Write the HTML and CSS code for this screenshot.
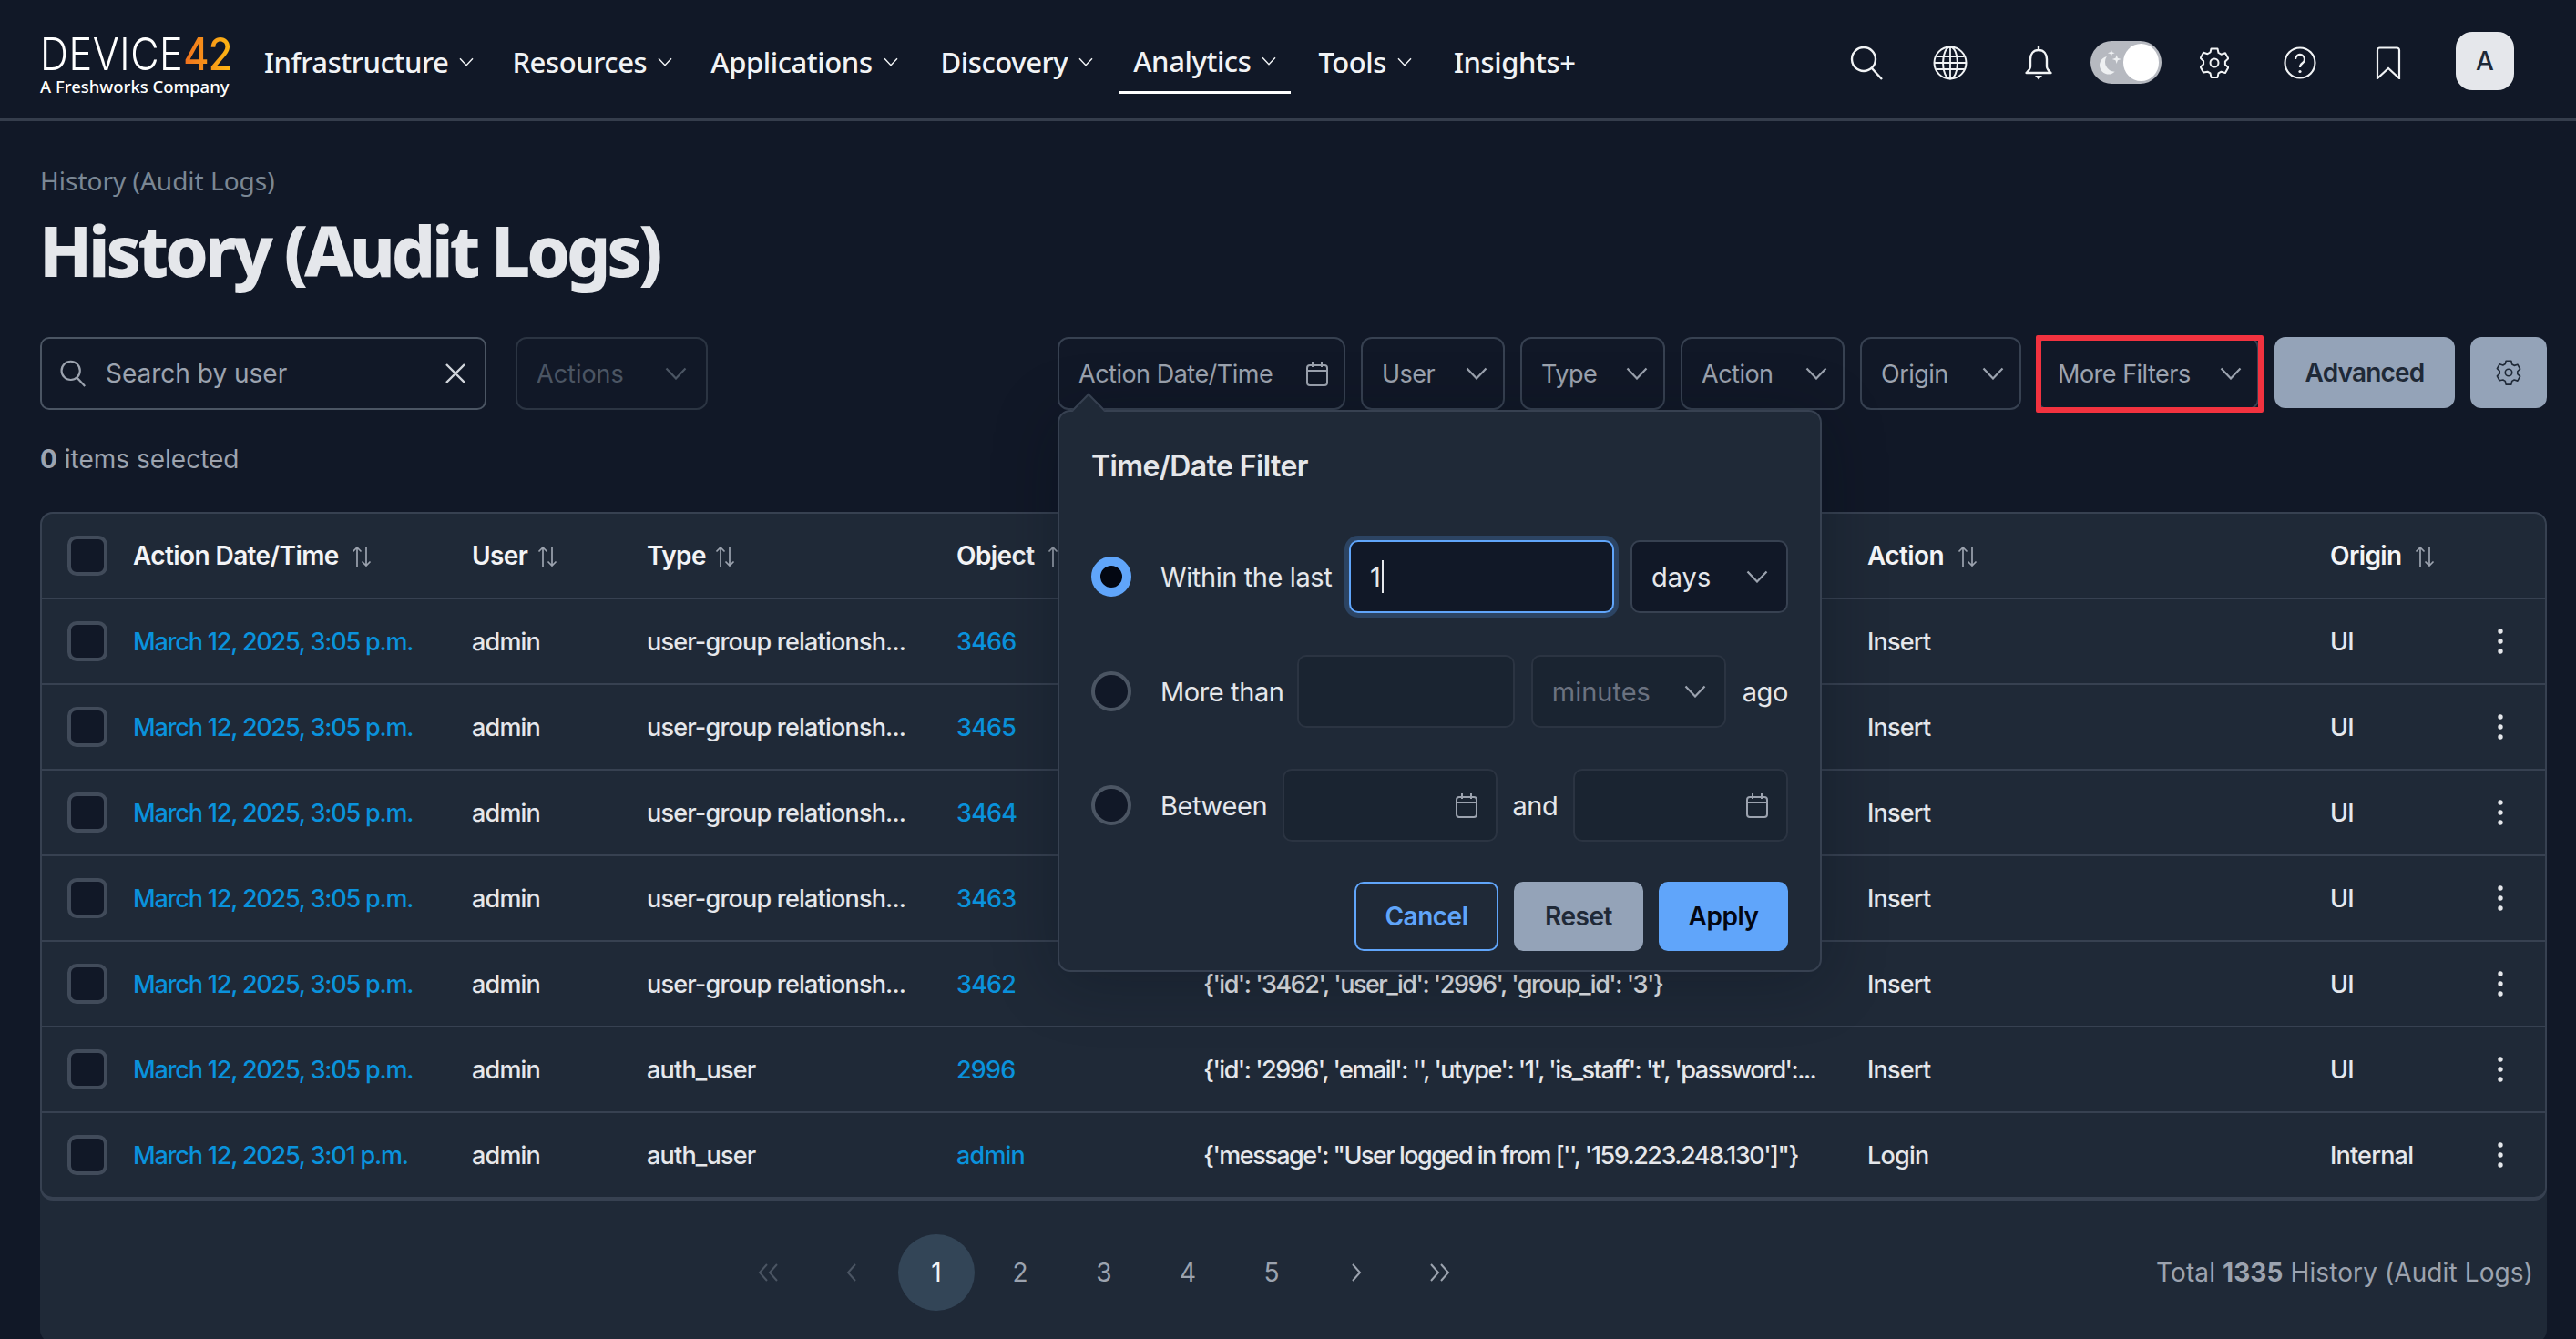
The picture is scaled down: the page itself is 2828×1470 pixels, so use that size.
FILE: index.html
```html
<!DOCTYPE html>
<html lang="en">
<head>
    <meta charset="UTF-8">
    <meta name="viewport" content="width=device-width, initial-scale=1.0">
    <title>History (Audit Logs)</title>
    <link rel="stylesheet" href="styles.css">
</head>
<body>
    <svg class="sprites" width="0" height="0">
        <symbol id="chev" viewBox="0 0 24 14"><path d="M1.5 1.5 12 12.5 22.5 1.5" fill="none" stroke="currentColor" stroke-width="2.2"/></symbol>
        <symbol id="sort" viewBox="0 0 22 24"><path d="M6 23V2M1.5 6.5 6 2l4.500 4.500M16 1v21M11.500 17.500 16 22l4.500-4.500" fill="none" stroke="currentColor" stroke-width="1.700"/></symbol>
        <symbol id="cal" viewBox="0 0 24 28"><path d="M4 5h16a3 3 0 0 1 3 3v16a3 3 0 0 1-3 3H4a3 3 0 0 1-3-3V8a3 3 0 0 1 3-3ZM1 11h22M7 1v6M17 1v6" fill="none" stroke="currentColor" stroke-width="2"/></symbol>
        <symbol id="gear" viewBox="0 0 32 34"><path d="M12.500 1.500h7l1 4.500 3 1.700 4.500-1.400 3.300 6-3.400 3.200v3.400l3.400 3.200-3.300 6-4.500-1.400-3 1.700-1 4.500h-7l-1-4.500-3-1.700L4 27.600l-3.300-6 3.400-3.200v-3.400L.7 11.800l3.300-6 4.500 1.400 3-1.700Z" fill="none" stroke="currentColor" stroke-width="2" stroke-linejoin="round"/><circle cx="16" cy="17" r="4.500" fill="none" stroke="currentColor" stroke-width="2"/></symbol>
        <symbol id="kebab" viewBox="0 0 6 28"><circle cx="3" cy="3" r="2.700" fill="currentColor"/><circle cx="3" cy="14" r="2.700" fill="currentColor"/><circle cx="3" cy="25" r="2.700" fill="currentColor"/></symbol>
        <symbol id="pg-first" viewBox="0 0 26 20"><path d="M11 1 3 10l8 9M22 1l-8 9 8 9" fill="none" stroke="currentColor" stroke-width="2"/></symbol>
        <symbol id="pg-prev" viewBox="0 0 26 20"><path d="M16 1 8 10l8 9" fill="none" stroke="currentColor" stroke-width="2"/></symbol>
        <symbol id="pg-next" viewBox="0 0 26 20"><path d="m10 1 8 9-8 9" fill="none" stroke="currentColor" stroke-width="2"/></symbol>
        <symbol id="pg-last" viewBox="0 0 26 20"><path d="m4 1 8 9-8 9M15 1l8 9-8 9" fill="none" stroke="currentColor" stroke-width="2"/></symbol>
    </svg>

    <header class="topbar">
        <div class="logo">
            <div class="logo-word">DEVICE<span class="logo-num">42</span></div>
            <div class="logo-sub">A Freshworks Company</div>
        </div>
        <nav class="nav">
            <a class="nav-item">Infrastructure <svg class="nav-chev"><use href="#chev"/></svg></a>
            <a class="nav-item">Resources <svg class="nav-chev"><use href="#chev"/></svg></a>
            <a class="nav-item">Applications <svg class="nav-chev"><use href="#chev"/></svg></a>
            <a class="nav-item">Discovery <svg class="nav-chev"><use href="#chev"/></svg></a>
            <a class="nav-item active">Analytics <svg class="nav-chev"><use href="#chev"/></svg></a>
            <a class="nav-item">Tools <svg class="nav-chev"><use href="#chev"/></svg></a>
            <a class="nav-item">Insights+</a>
        </nav>
        <div class="top-icons">
            <svg class="ti ti-search" viewBox="0 0 36 38"><circle cx="15" cy="15" r="13" fill="none" stroke="currentColor" stroke-width="2.400"/><path d="m24 25 11 12" stroke="currentColor" stroke-width="2.400"/></svg>
            <svg class="ti ti-globe" viewBox="0 0 38 38"><g fill="none" stroke="currentColor" stroke-width="2"><circle cx="19" cy="19" r="17.500"/><ellipse cx="19" cy="19" rx="8" ry="17.500"/><path d="M19 1.500v35M3.500 12h31M3.500 26h31M1.500 19h35" stroke-width="1.800"/></g></svg>
            <svg class="ti ti-bell" viewBox="0 0 32 38"><path d="M16 1v4M16 5c-6 0-9 4.500-9 10v8c0 3-2.500 5-4.500 7h27c-2-2-4.500-4-4.500-7v-8c0-5.500-3-10-9-10Z" fill="none" stroke="currentColor" stroke-width="2.400" stroke-linejoin="round"/><path d="M12 33h8l-4 4.500Z" fill="currentColor"/></svg>
            <div class="mode-toggle">
                <svg class="mode-moon" viewBox="0 0 30 32"><path d="M12 9a10 10 0 1 0 9 17A11 11 0 0 1 12 9Z" fill="#eef0f2"/><path d="m17 1 1 3 3 1-3 1-1 3-1-3-3-1 3-1ZM23 7l1.200 3.800L28 12l-3.800 1.200L23 17l-1.200-3.800L18 12l3.800-1.200Z" fill="#eef0f2"/></svg>
                <span class="mode-knob"></span>
            </div>
            <svg class="ti ti-gear"><use href="#gear"/></svg>
            <svg class="ti ti-help" viewBox="0 0 36 36"><circle cx="18" cy="18" r="16.500" fill="none" stroke="currentColor" stroke-width="2.200"/><path d="M13 14a5 5 0 1 1 8 4c-2 1.500-3 2.500-3 5" fill="none" stroke="currentColor" stroke-width="2.200"/><circle cx="18" cy="27.500" r="1.600" fill="currentColor"/></svg>
            <svg class="ti ti-mark" viewBox="0 0 28 36"><path d="M2 35V4a2.500 2.500 0 0 1 2.500-2.500h19A2.500 2.500 0 0 1 26 4v31L14 24Z" fill="none" stroke="currentColor" stroke-width="2.200"/></svg>
            <div class="avatar">A</div>
        </div>
    </header>

    <main class="page">
        <div class="crumb">History (Audit Logs)</div>
        <h1 class="title">History (Audit Logs)</h1>

        <div class="toolbar">
            <div class="search">
                <svg class="search-ico" viewBox="0 0 36 38"><circle cx="15" cy="15" r="13" fill="none" stroke="currentColor" stroke-width="2.800"/><path d="m24 25 11 12" stroke="currentColor" stroke-width="2.800"/></svg>
                <span class="search-text">Search by user</span>
                <svg class="search-x" viewBox="0 0 24 24"><path d="m2 2 20 20M22 2 2 22" stroke="currentColor" stroke-width="2.400"/></svg>
            </div>
            <div class="pick pick-off actions">Actions <svg class="chev"><use href="#chev"/></svg></div>

            <div class="filters">
                <div class="pick f-date">Action Date/Time <svg class="cal"><use href="#cal"/></svg></div>
                <div class="pick f-user">User <svg class="chev"><use href="#chev"/></svg></div>
                <div class="pick f-type">Type <svg class="chev"><use href="#chev"/></svg></div>
                <div class="pick f-action">Action <svg class="chev"><use href="#chev"/></svg></div>
                <div class="pick f-origin">Origin <svg class="chev"><use href="#chev"/></svg></div>
                <div class="pick f-more">More Filters <svg class="chev"><use href="#chev"/></svg></div>
                <button class="btn-grey btn-adv">Advanced</button>
                <button class="btn-grey btn-cog"><svg class="cog"><use href="#gear"/></svg></button>

                <div class="popup">
                    <div class="popup-title">Time/Date Filter</div>

                    <div class="pop-row row-a">
                        <span class="radio on"></span>
                        <span class="pop-label">Within the last</span>
                        <div class="field field-on"><span>1</span><i class="caret"></i></div>
                        <div class="field field-days">days <svg class="chev"><use href="#chev"/></svg></div>
                    </div>
                    <div class="pop-row row-b">
                        <span class="radio"></span>
                        <span class="pop-label">More than</span>
                        <div class="field field-off field-num"></div>
                        <div class="field field-off field-min">minutes <svg class="chev"><use href="#chev"/></svg></div>
                        <span class="pop-label">ago</span>
                    </div>
                    <div class="pop-row row-c">
                        <span class="radio"></span>
                        <span class="pop-label">Between</span>
                        <div class="field field-off field-when"><svg class="cal"><use href="#cal"/></svg></div>
                        <span class="pop-label">and</span>
                        <div class="field field-off field-when"><svg class="cal"><use href="#cal"/></svg></div>
                    </div>

                    <div class="pop-btns">
                        <button class="btn btn-cancel">Cancel</button>
                        <button class="btn btn-reset">Reset</button>
                        <button class="btn btn-apply">Apply</button>
                    </div>
                </div>
            </div>
        </div>

        <div class="selected"><b>0</b> items selected</div>

        <section class="panel">
            <table class="grid">
                <colgroup>
                    <col class="c-check"><col class="c-date"><col class="c-user"><col class="c-type"><col class="c-obj"><col class="c-change"><col class="c-action"><col class="c-origin"><col class="c-menu">
                </colgroup>
                <thead>
                    <tr>
                        <th><span class="box"></span></th>
                        <th>Action Date/Time <svg class="sort"><use href="#sort"/></svg></th>
                        <th>User <svg class="sort"><use href="#sort"/></svg></th>
                        <th>Type <svg class="sort"><use href="#sort"/></svg></th>
                        <th>Object <svg class="sort"><use href="#sort"/></svg></th>
                        <th></th>
                        <th>Action <svg class="sort"><use href="#sort"/></svg></th>
                        <th>Origin <svg class="sort"><use href="#sort"/></svg></th>
                        <th></th>
                    </tr>
                </thead>
                <tbody>
                    <tr>
                        <td><span class="box"></span></td><td class="when"><a>March 12, 2025, 3:05 p.m.</a></td><td>admin</td><td>user-group relationsh...</td><td><a>3466</a></td>
                        <td class="change"></td><td>Insert</td><td>UI</td><td><svg class="kebab"><use href="#kebab"/></svg></td>
                    </tr>
                    <tr>
                        <td><span class="box"></span></td><td class="when"><a>March 12, 2025, 3:05 p.m.</a></td><td>admin</td><td>user-group relationsh...</td><td><a>3465</a></td>
                        <td class="change"></td><td>Insert</td><td>UI</td><td><svg class="kebab"><use href="#kebab"/></svg></td>
                    </tr>
                    <tr>
                        <td><span class="box"></span></td><td class="when"><a>March 12, 2025, 3:05 p.m.</a></td><td>admin</td><td>user-group relationsh...</td><td><a>3464</a></td>
                        <td class="change"></td><td>Insert</td><td>UI</td><td><svg class="kebab"><use href="#kebab"/></svg></td>
                    </tr>
                    <tr>
                        <td><span class="box"></span></td><td class="when"><a>March 12, 2025, 3:05 p.m.</a></td><td>admin</td><td>user-group relationsh...</td><td><a>3463</a></td>
                        <td class="change"></td><td>Insert</td><td>UI</td><td><svg class="kebab"><use href="#kebab"/></svg></td>
                    </tr>
                    <tr>
                        <td><span class="box"></span></td><td class="when"><a>March 12, 2025, 3:05 p.m.</a></td><td>admin</td><td>user-group relationsh...</td><td><a>3462</a></td>
                        <td class="change">{'id': '3462', 'user_id': '2996', 'group_id': '3'}</td><td>Insert</td><td>UI</td><td><svg class="kebab"><use href="#kebab"/></svg></td>
                    </tr>
                    <tr>
                        <td><span class="box"></span></td><td class="when"><a>March 12, 2025, 3:05 p.m.</a></td><td>admin</td><td>auth_user</td><td><a>2996</a></td>
                        <td class="change">{'id': '2996', 'email': '', 'utype': '1', 'is_staff': 't', 'password':...</td><td>Insert</td><td>UI</td><td><svg class="kebab"><use href="#kebab"/></svg></td>
                    </tr>
                    <tr>
                        <td><span class="box"></span></td><td class="when"><a>March 12, 2025, 3:01 p.m.</a></td><td>admin</td><td>auth_user</td><td><a>admin</a></td>
                        <td class="change">{'message': "User logged in from ['', '159.223.248.130']"}</td><td>Login</td><td>Internal</td><td><svg class="kebab"><use href="#kebab"/></svg></td>
                    </tr>
                </tbody>
            </table>

            <div class="pager-row">
                <div class="pager">
                    <span class="pg pg-dim"><svg class="pg-ico"><use href="#pg-first"/></svg></span>
                    <span class="pg pg-dim"><svg class="pg-ico"><use href="#pg-prev"/></svg></span>
                    <span class="pg pg-on">1</span>
                    <span class="pg">2</span>
                    <span class="pg">3</span>
                    <span class="pg">4</span>
                    <span class="pg">5</span>
                    <span class="pg"><svg class="pg-ico"><use href="#pg-next"/></svg></span>
                    <span class="pg"><svg class="pg-ico"><use href="#pg-last"/></svg></span>
                </div>
                <div class="total">Total <b>1335</b> History (Audit Logs)</div>
            </div>
        </section>
    </main>
</body>
</html>
```

FILE: styles.css
```css
* {
    box-sizing: border-box;
}

html,
body {
    height: 100%;
}

body {
    margin: 0;
    background-color: #111827;
    color: #e5e7eb;
    font-family: Inter, "Noto Sans", sans-serif;
    font-size: 28px;
    overflow: hidden;
}

.sprites {
    position: absolute;
}

/* top bar */
.topbar {
    display: flex;
    align-items: center;
    height: 133px;
    padding-left: 44px;
    border-bottom: 3px solid #353d4c;
}

.logo {
    width: 246px;
    flex: none;
    margin-top: 14px;
}

.logo-word {
    width: 212px;
    color: #fff;
    font-size: 49px;
    font-weight: 300;
    line-height: 42px;
    letter-spacing: 0.6px;
    white-space: nowrap;
    transform: scaleX(0.88);
    transform-origin: left center;
}

.logo-num {
    font-weight: 500;
    letter-spacing: -1px;
    background: linear-gradient(90deg, #f0701e, #fdb813);
    -webkit-background-clip: text;
    background-clip: text;
    color: transparent;
}

.logo-sub {
    margin-top: 3px;
    color: #fff;
    font-family: "Noto Sans", sans-serif;
    font-size: 18.500px;
    font-weight: 500;
    line-height: 22px;
    white-space: nowrap;
}

.nav {
    display: flex;
    align-items: center;
    height: 100%;
    padding-top: 6px;
    font-family: "Noto Sans", sans-serif;
    font-size: 31px;
    font-weight: 500;
    letter-spacing: -0.4px;
    color: #f1f3f5;
}

.nav-item {
    display: flex;
    align-items: center;
    gap: 12px;
    height: 62px;
    margin-right: 38px;
    padding: 0 4px 0 0;
    white-space: nowrap;
}

.nav-item:nth-child(3) {
    margin-right: 43px;
}

.nav-item:nth-child(4) {
    margin-right: 40px;
}

.nav-item:nth-child(6) {
    margin-right: 42px;
}

.nav-item.active {
    margin: 8px 30px 0 -15px;
    padding: 0 16px 8px 15px;
    border-bottom: 3px solid #fff;
}

.nav-chev {
    width: 16px;
    height: 10px;
    color: #f1f3f5;
}

.top-icons {
    display: flex;
    align-items: center;
    margin-left: auto;
    padding: 7px 68px 0 0;
    color: #f1f3f5;
}

.ti {
    flex: none;
}

.ti-search {
    width: 36px;
    height: 38px;
    margin-right: 55px;
}

.ti-globe {
    width: 38px;
    height: 38px;
    margin-right: 62px;
}

.ti-bell {
    width: 32px;
    height: 38px;
    margin-right: 41px;
}

.mode-toggle {
    display: flex;
    align-items: center;
    justify-content: space-between;
    width: 78px;
    height: 47px;
    padding: 0 3px 0 6px;
    margin-right: 42px;
    border-radius: 24px;
    background-color: #b6b9c0;
}

.mode-moon {
    width: 30px;
    height: 32px;
}

.mode-knob {
    width: 40px;
    height: 41px;
    border-radius: 50%;
    background-color: #fff;
}

.ti-gear {
    width: 32px;
    height: 36px;
    margin-right: 60px;
}

.ti-help {
    width: 36px;
    height: 36px;
    margin-right: 65px;
}

.ti-mark {
    width: 28px;
    height: 36px;
    margin-right: 60px;
}

.avatar {
    display: flex;
    align-items: center;
    justify-content: center;
    width: 64px;
    height: 64px;
    margin-top: -4px;
    border-radius: 18px;
    background-color: #e5e7eb;
    color: #1f2937;
    font-size: 28px;
    font-weight: 500;
}

/* page head */
.page {
    padding: 0 32px 0 44px;
}

.crumb {
    padding-top: 47px;
    color: #7b8794;
    font-family: "Noto Sans", sans-serif;
    font-size: 28px;
    line-height: 36px;
}

.title {
    margin: 9px 0 0 -1px;
    color: #e5e7eb;
    font-family: "Noto Sans", sans-serif;
    font-size: 76px;
    font-weight: 800;
    line-height: 100px;
    letter-spacing: -4.100px;
}

/* filter row */
.toolbar {
    display: flex;
    align-items: flex-start;
    height: 80px;
    margin-top: 45px;
}

.search {
    display: flex;
    align-items: center;
    width: 490px;
    height: 80px;
    padding: 0 20px 0 20px;
    border: 2px solid #4b5563;
    border-radius: 10px;
    color: #9ca3af;
}

.search-ico {
    width: 28px;
    height: 30px;
    flex: none;
}

.search-text {
    flex: 1;
    margin-left: 22px;
}

.search-x {
    width: 24px;
    height: 24px;
    color: #d1d5db;
}

.pick {
    display: flex;
    align-items: center;
    justify-content: space-between;
    height: 80px;
    padding: 0 17px 0 21px;
    border: 2px solid #374151;
    border-radius: 12px;
    color: #9ca3af;
    font-size: 27px;
    letter-spacing: -0.5px;
    white-space: nowrap;
}

.pick-off {
    color: #4b5563;
    border-color: #2b3442;
    letter-spacing: 0;
    padding-right: 21px;
}

.actions {
    width: 211px;
    margin-left: 32px;
}

.chev {
    width: 24px;
    height: 14px;
    flex: none;
    color: #9ca3af;
}

.cal {
    width: 24px;
    height: 28px;
    flex: none;
    color: #9ca3af;
}

.pick-off .chev {
    color: #4b5563;
}

.filters {
    position: relative;
    display: flex;
    margin-left: auto;
    gap: 17px;
}

.f-date {
    width: 316px;
}

.f-user {
    width: 158px;
}

.f-type {
    width: 159px;
}

.f-action {
    width: 180px;
}

.f-origin {
    width: 177px;
}

.f-more {
    position: relative;
    width: 244px;
}

/* red annotation box drawn over the button in the screenshot */
.f-more::after {
    content: "";
    position: absolute;
    inset: -4px -7px -5px -3px;
    border: 6px solid #f2323f;
    border-radius: 2px;
}

.btn-grey {
    height: 78px;
    padding: 0;
    border: 0;
    border-radius: 12px;
    background-color: #94a3b8;
    color: #1f2937;
    font-family: inherit;
    font-size: 28px;
    font-weight: 600;
    letter-spacing: -0.8px;
}

.btn-adv {
    width: 198px;
}

.btn-cog {
    width: 84px;
    display: flex;
    align-items: center;
    justify-content: center;
}

.cog {
    width: 28px;
    height: 28px;
}

/* date popup */
.popup {
    position: absolute;
    top: 80px;
    left: 0;
    z-index: 5;
    width: 839px;
    height: 617px;
    padding: 38px 35px 0;
    border: 2px solid #374151;
    border-radius: 14px;
    background-color: #1f2937;
    box-shadow: 0 10px 70px rgba(8, 12, 22, 0.3);
}

.popup::before {
    content: "";
    position: absolute;
    top: -15px;
    left: 19px;
    width: 24px;
    height: 24px;
    border-left: 2px solid #374151;
    border-top: 2px solid #374151;
    background-color: #1f2937;
    transform: rotate(45deg);
}

.popup-title {
    color: #e5e7eb;
    font-size: 32px;
    font-weight: 600;
    line-height: 44px;
    letter-spacing: -0.6px;
}

.pop-row {
    display: flex;
    align-items: center;
    justify-content: space-between;
    height: 80px;
    color: #e5e7eb;
}

.row-a {
    margin-top: 59px;
}

.row-b {
    margin-top: 46px;
}

.row-c {
    margin-top: 45px;
}

.radio {
    flex: none;
    width: 44px;
    height: 44px;
    margin-right: 32px;
    border: 4px solid #4b5563;
    border-radius: 50%;
    background-color: #111827;
}

.radio.on {
    border: 10px solid #60a5fa;
    background-color: #030712;
}

.pop-label {
    flex: none;
    font-size: 29px;
    letter-spacing: -0.4px;
}

.row-a .pop-label,
.row-b .pop-label:nth-child(2),
.row-c .pop-label:nth-child(2) {
    margin-right: auto;
}

.field {
    display: flex;
    align-items: center;
    height: 80px;
    border: 2px solid #374151;
    border-radius: 10px;
    background-color: #111827;
    font-size: 29px;
}

.field-on {
    width: 291px;
    padding-left: 21px;
    margin-right: 18px;
    border-color: #60a5fa;
    box-shadow: 0 0 0 5px #2c4463;
}

.caret {
    width: 2px;
    height: 36px;
    margin-left: 1px;
    background-color: #e5e7eb;
}

.field-days {
    width: 173px;
    justify-content: space-between;
    padding: 0 20px 0 21px;
}

.field-off {
    background-color: #1a2431;
    border-color: #2b3442;
    color: #6b7280;
}

.field-num {
    width: 239px;
    margin-right: 18px;
}

.field-min {
    width: 214px;
    justify-content: space-between;
    padding: 0 20px 0 21px;
    margin-right: 18px;
}

.field-when {
    width: 236px;
    justify-content: flex-end;
    padding-right: 20px;
}

.row-c .pop-label:nth-child(4) {
    margin: 0 auto;
}

.pop-btns {
    display: flex;
    justify-content: flex-end;
    gap: 17px;
    margin-top: 44px;
}

.btn {
    height: 76px;
    padding: 0;
    border: 2px solid transparent;
    border-radius: 10px;
    font-family: inherit;
    font-size: 28px;
    font-weight: 600;
    letter-spacing: -0.5px;
}

.btn-cancel {
    width: 158px;
    border-color: #60a5fa;
    background: none;
    color: #60a5fa;
}

.btn-reset {
    width: 142px;
    background-color: #94a3b8;
    color: #1f2937;
}

.btn-apply {
    width: 142px;
    background-color: #60a5fa;
    color: #030712;
}

.selected {
    margin-top: 36px;
    color: #9ca3af;
    font-size: 28px;
    line-height: 36px;
}

/* table */
.panel {
    margin-top: 40px;
    height: 912px;
    border-radius: 14px;
    background-color: #1f2937;
}

.grid {
    width: 100%;
    table-layout: fixed;
    border-collapse: separate;
    border-spacing: 0;
    border: 2px solid #374151;
    border-bottom-width: 4px;
    border-radius: 14px;
}

.c-check {
    width: 100px;
}

.c-date {
    width: 372px;
}

.c-user {
    width: 192px;
}

.c-type {
    width: 340px;
}

.c-obj {
    width: 271px;
}

.c-change {
    width: 729px;
}

.c-action {
    width: 508px;
}

.c-origin {
    width: 184px;
}

th,
td {
    height: 94px;
    padding: 0;
    text-align: left;
    white-space: nowrap;
    border-bottom: 2px solid #374151;
    font-size: 27px;
    font-weight: 500;
    letter-spacing: -0.8px;
}

th {
    color: #f3f4f6;
    font-size: 28px;
    font-weight: 600;
    letter-spacing: -0.6px;
}

th:nth-child(3) .sort,
th:nth-child(4) .sort {
    margin-left: 4px;
}

tbody tr:last-child td {
    height: 92px;
    border-bottom: 0;
}

td:first-child,
th:first-child {
    padding-left: 28px;
}

td a {
    color: #0a92dc;
}

td.when {
    letter-spacing: -1.200px;
}

td.change {
    letter-spacing: -1.500px;
}

.box {
    display: block;
    width: 44px;
    height: 44px;
    border: 4px solid #414b5a;
    border-radius: 10px;
    background-color: #111827;
}

.sort {
    width: 22px;
    height: 24px;
    margin-left: 8px;
    vertical-align: -3px;
    color: #9ca3af;
}

.kebab {
    display: block;
    width: 6px;
    height: 28px;
}

/* pagination */
.pager-row {
    position: relative;
    display: flex;
    justify-content: flex-end;
    align-items: center;
    height: 158px;
    padding-right: 15px;
}

.pager {
    position: absolute;
    left: 758px;
    top: 37px;
    display: flex;
    gap: 8px;
}

.pg {
    display: flex;
    align-items: center;
    justify-content: center;
    width: 84px;
    height: 84px;
    border-radius: 50%;
    color: #9ca3af;
    font-size: 28px;
}

.pg-ico {
    width: 26px;
    height: 20px;
}

.pg-dim {
    color: #4b5563;
}

.pg-on {
    background-color: #334557;
    color: #f3f4f6;
}

.total {
    color: #9ca3af;
    font-size: 28px;
    letter-spacing: 0.1px;
}
```
